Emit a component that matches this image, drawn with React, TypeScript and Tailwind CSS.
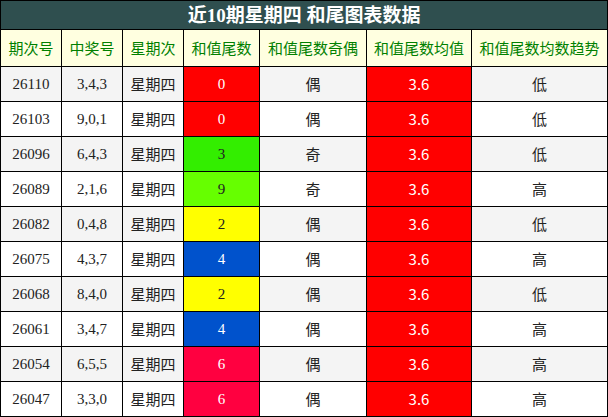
const rows = [
  { id: "26110", nums: "3,4,3", tail: "0", tailBg: "bg-[#ff0000]", tailText: "text-white", parity: "偶", trend: "低" },
  { id: "26103", nums: "9,0,1", tail: "0", tailBg: "bg-[#ff0000]", tailText: "text-white", parity: "偶", trend: "低" },
  { id: "26096", nums: "6,4,3", tail: "3", tailBg: "bg-[#33ee00]", tailText: "text-[#222]", parity: "奇", trend: "低" },
  { id: "26089", nums: "2,1,6", tail: "9", tailBg: "bg-[#66ff00]", tailText: "text-[#222]", parity: "奇", trend: "高" },
  { id: "26082", nums: "0,4,8", tail: "2", tailBg: "bg-[#ffff00]", tailText: "text-[#222]", parity: "偶", trend: "低" },
  { id: "26075", nums: "4,3,7", tail: "4", tailBg: "bg-[#0052cc]", tailText: "text-white", parity: "偶", trend: "高" },
  { id: "26068", nums: "8,4,0", tail: "2", tailBg: "bg-[#ffff00]", tailText: "text-[#222]", parity: "偶", trend: "低" },
  { id: "26061", nums: "3,4,7", tail: "4", tailBg: "bg-[#0052cc]", tailText: "text-white", parity: "偶", trend: "高" },
  { id: "26054", nums: "6,5,5", tail: "6", tailBg: "bg-[#ff0040]", tailText: "text-white", parity: "偶", trend: "高" },
  { id: "26047", nums: "3,3,0", tail: "6", tailBg: "bg-[#ff0040]", tailText: "text-white", parity: "偶", trend: "高" },
];

const headers = ["期次号", "中奖号", "星期次", "和值尾数", "和值尾数奇偶", "和值尾数均值", "和值尾数均数趋势"];
const widths = ["w-[61px]", "w-[61px]", "w-[61px]", "w-[76px]", "w-[107px]", "w-[105px]", "w-[136px]"];

export default function App() {
  return (
    <div className="w-[608px] bg-white font-['Liberation_Serif','Noto_Sans_CJK_SC',serif] text-[#222]">
      <table className="w-[608px] table-fixed border-collapse border border-black">
        <colgroup>
          {widths.map((w, i) => (
            <col key={i} className={w} />
          ))}
        </colgroup>
        <thead>
          <tr className="h-[29px] bg-[#2f4f4f]">
            <th colSpan={7} className="border border-black text-center text-[19px] leading-none font-bold text-white">
              近10期星期四 和尾图表数据
            </th>
          </tr>
          <tr className="h-[37px] bg-[#ffffe0]">
            {headers.map((h) => (
              <th key={h} className="border border-black text-center text-[15px] font-normal text-[#008000] font-['Noto_Sans_CJK_SC',sans-serif]">
                {h}
              </th>
            ))}
          </tr>
        </thead>
        <tbody>
          {rows.map((r, i) => (
            <tr key={r.id} className={`h-[35px] ${i % 2 === 0 ? "bg-[#f4f4f4]" : "bg-white"}`}>
              <td className="border border-black text-center text-[15px]">{r.id}</td>
              <td className="border border-black text-center text-[15px]">{r.nums}</td>
              <td className="border border-black text-center text-[15px] font-['Noto_Sans_CJK_SC',sans-serif]">星期四</td>
              <td className={`border border-black text-center text-[15px] ${r.tailBg} ${r.tailText}`}>{r.tail}</td>
              <td className="border border-black text-center text-[15px] font-['Noto_Sans_CJK_SC',sans-serif]">{r.parity}</td>
              <td className="border border-black bg-[#ff0000] text-center text-[15px] text-white font-['Noto_Sans_CJK_SC',sans-serif]">3.6</td>
              <td className="border border-black text-center text-[15px] font-['Noto_Sans_CJK_SC',sans-serif]">{r.trend}</td>
            </tr>
          ))}
        </tbody>
      </table>
    </div>
  );
}
